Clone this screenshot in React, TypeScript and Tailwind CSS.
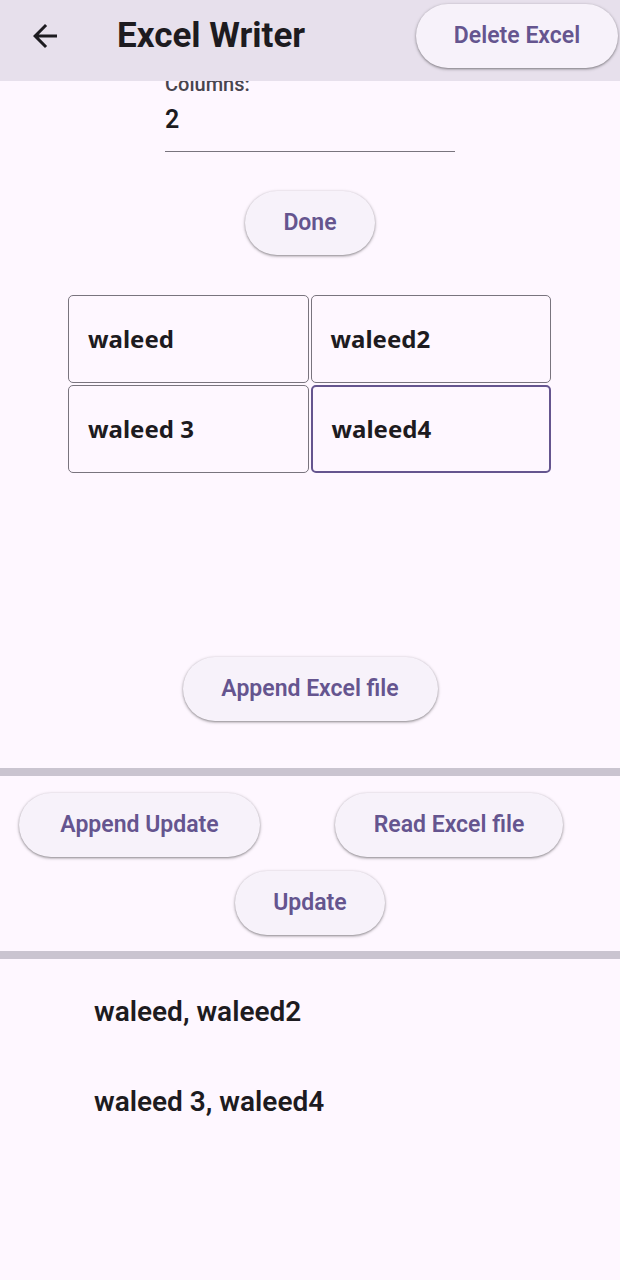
import React from "react";

const btn =
  "h-[64px] rounded-full bg-[#f7f2fa] text-[#65558f] text-[23px] font-semibold shadow-[0_1px_2px_rgba(0,0,0,0.3),0_1px_3px_1px_rgba(0,0,0,0.15)] flex items-center justify-center";

function ElevatedButton({ label, className }: { label: string; className?: string }) {
  return <button className={`${btn} ${className ?? ""}`}>{label}</button>;
}

function Cell({ text, focused }: { text: string; focused?: boolean }) {
  return (
    <div
      className={`h-[88px] rounded-[5px] flex items-center pl-[19px] text-[24px] font-bold text-[#1d1b20] [font-family:'Noto_Sans',sans-serif] ${
        focused ? "border-2 border-[#65558f]" : "border border-[#79747e]"
      }`}
    >
      {text}
    </div>
  );
}

export default function App() {
  return (
    <div className="w-[620px] h-[1280px] bg-[#fef7ff] flex flex-col overflow-hidden [font-family:Roboto,'Liberation_Sans',sans-serif]">
      {/* app bar */}
      <div className="relative z-10 h-[81px] bg-[#e7e0ec] flex items-start shrink-0">
        <div className="w-[36px] h-[36px] ml-[27px] mt-[18px] text-[#1d1b20]">
          <svg viewBox="0 0 24 24" width="36" height="36" fill="currentColor">
            <path d="M20 11H7.83l5.59-5.59L12 4l-8 8 8 8 1.41-1.41L7.83 13H20v-2z" />
          </svg>
        </div>
        <div className="ml-[54px] mt-[16px] text-[35px] leading-[40px] font-bold text-[#1d1b20]">Excel Writer</div>
        <ElevatedButton label="Delete Excel" className="ml-auto mr-[2px] mt-[4px] w-[202px]" />
      </div>

      {/* columns input */}
      <div className="overflow-hidden">
        <div className="-mt-[8px] ml-[165px] w-[290px]">
          <div className="text-[20px] leading-[22px] font-medium text-[#49454f]">Columns:</div>
          <div className="h-[57px] border-b border-[#79747e] pt-[9px] text-[25px] leading-[32px] font-semibold text-[#1d1b20]">
            2
          </div>
        </div>
      </div>

      <div className="flex justify-center mt-[39px]">
        <ElevatedButton label="Done" className="w-[130px]" />
      </div>

      {/* grid */}
      <div className="mt-[40px] ml-[68px] w-[483px] grid grid-cols-2 gap-[2px]">
        <Cell text="waleed" />
        <Cell text="waleed2" />
        <Cell text="waleed 3" />
        <Cell text="waleed4" focused />
      </div>

      <div className="flex justify-center mt-[184px]">
        <ElevatedButton label="Append Excel file" className="w-[255px] h-[63px]" />
      </div>

      <div className="mt-[47px] h-[8px] bg-[#cac4d0]" />

      <div className="mt-[17px] flex">
        <ElevatedButton label="Append Update" className="ml-[19px] w-[241px] h-[63px]" />
        <ElevatedButton label="Read Excel file" className="ml-[75px] w-[228px] h-[63px]" />
      </div>
      <div className="flex justify-center mt-[14px]">
        <ElevatedButton label="Update" className="w-[150px]" />
      </div>

      <div className="mt-[16px] h-[8px] bg-[#cac4d0]" />

      <div className="mt-[34px] ml-[94px] flex flex-col gap-[52px] text-[28px] leading-[38px] font-semibold text-[#1d1b20]">
        <div>waleed, waleed2</div>
        <div>waleed 3, waleed4</div>
      </div>
    </div>
  );
}
